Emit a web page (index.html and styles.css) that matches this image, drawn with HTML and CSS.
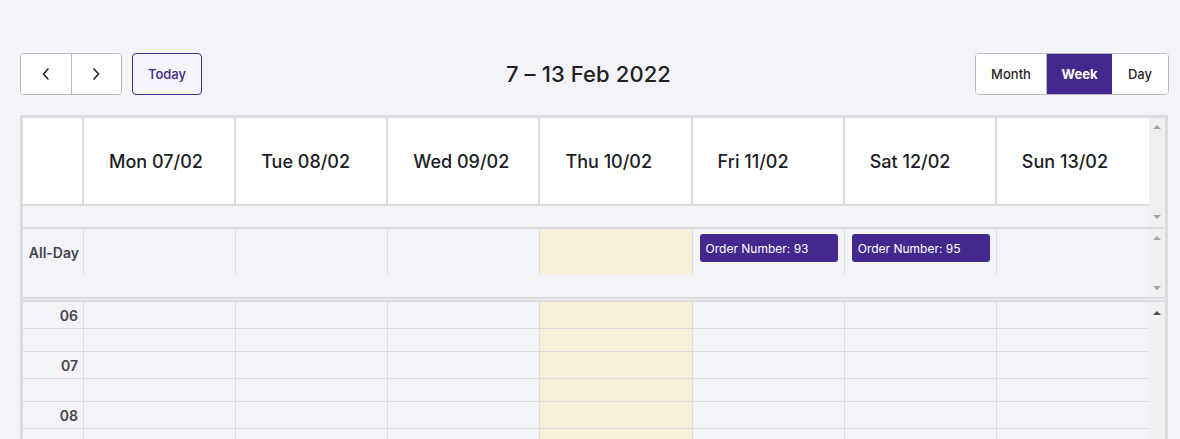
FILE: index.html
```html
<!DOCTYPE html>
<html lang="en">
<head>
<meta charset="utf-8">
<title>Week view</title>
<link rel="stylesheet" href="styles.css">
</head>
<body>
<div class="page">
  <div class="toolbar">
    <div class="btn-group nav">
      <button class="btn nav-btn" aria-label="Previous">
        <svg width="10" height="14" viewBox="0 0 10 14"><path d="M7 2 L2.5 7 L7 12" fill="none" stroke="#222" stroke-width="1.6" stroke-linecap="round" stroke-linejoin="round"/></svg>
      </button>
      <button class="btn nav-btn" aria-label="Next">
        <svg width="10" height="14" viewBox="0 0 10 14"><path d="M3 2 L7.5 7 L3 12" fill="none" stroke="#222" stroke-width="1.6" stroke-linecap="round" stroke-linejoin="round"/></svg>
      </button>
    </div>
    <button class="btn today">Today</button>
    <h1 class="title">7 – 13 Feb 2022</h1>
    <div class="btn-group views">
      <button class="btn view month">Month</button>
      <button class="btn view week active">Week</button>
      <button class="btn view day">Day</button>
    </div>
  </div>

  <div class="calendar">
    <div class="section head">
      <div class="content">
        <div class="grid head-row">
          <div class="hcell gutter"></div>
          <div class="hcell">Mon 07/02</div>
          <div class="hcell">Tue 08/02</div>
          <div class="hcell">Wed 09/02</div>
          <div class="hcell">Thu 10/02</div>
          <div class="hcell">Fri 11/02</div>
          <div class="hcell">Sat 12/02</div>
          <div class="hcell last">Sun 13/02</div>
        </div>
        <div class="strip"></div>
      </div>
      <div class="scrollbar head-sb">
        <span class="arr up"></span>
        <span class="arr down"></span>
      </div>
    </div>

    <div class="section allday">
      <div class="content">
        <div class="grid allday-row">
          <div class="acell label">All-Day</div>
          <div class="acell"></div>
          <div class="acell"></div>
          <div class="acell"></div>
          <div class="acell today-col"></div>
          <div class="acell"><div class="event">Order Number: 93</div></div>
          <div class="acell"><div class="event">Order Number: 95</div></div>
          <div class="acell last"></div>
        </div>
      </div>
      <div class="scrollbar allday-sb">
        <span class="arr up"></span>
        <span class="arr down"></span>
      </div>
    </div>

    <div class="section time">
      <div class="content">
        <div class="grid trow hour"><div class="tcell label">06</div><div class="tcell"></div><div class="tcell"></div><div class="tcell"></div><div class="tcell today-col"></div><div class="tcell"></div><div class="tcell"></div><div class="tcell last"></div></div>
        <div class="grid trow half"><div class="tcell label"></div><div class="tcell"></div><div class="tcell"></div><div class="tcell"></div><div class="tcell today-col"></div><div class="tcell"></div><div class="tcell"></div><div class="tcell last"></div></div>
        <div class="grid trow hour"><div class="tcell label">07</div><div class="tcell"></div><div class="tcell"></div><div class="tcell"></div><div class="tcell today-col"></div><div class="tcell"></div><div class="tcell"></div><div class="tcell last"></div></div>
        <div class="grid trow half"><div class="tcell label"></div><div class="tcell"></div><div class="tcell"></div><div class="tcell"></div><div class="tcell today-col"></div><div class="tcell"></div><div class="tcell"></div><div class="tcell last"></div></div>
        <div class="grid trow hour"><div class="tcell label">08</div><div class="tcell"></div><div class="tcell"></div><div class="tcell"></div><div class="tcell today-col"></div><div class="tcell"></div><div class="tcell"></div><div class="tcell last"></div></div>
        <div class="grid trow half"><div class="tcell label"></div><div class="tcell"></div><div class="tcell"></div><div class="tcell"></div><div class="tcell today-col"></div><div class="tcell"></div><div class="tcell"></div><div class="tcell last"></div></div>
        <div class="grid trow hour"><div class="tcell label"></div><div class="tcell"></div><div class="tcell"></div><div class="tcell"></div><div class="tcell today-col"></div><div class="tcell"></div><div class="tcell"></div><div class="tcell last"></div></div>
      </div>
      <div class="scrollbar time-sb">
        <span class="arr up dark"></span>
      </div>
    </div>
  </div>
</div>
</body>
</html>
```

FILE: styles.css
```css
* { box-sizing: border-box; }

html, body {
  margin: 0;
  padding: 0;
  background: #f4f3f9;
  font-family: Inter, "Noto Sans", "Liberation Sans", sans-serif;
  color: #222;
  overflow: hidden;
}

.page {
  padding: 53px 11px 0 20px;
}

/* Toolbar */
.toolbar {
  display: flex;
  align-items: center;
  height: 42px;
}

.btn {
  font-family: inherit;
  margin: 0;
  padding: 0;
  border: none;
  background: #fff;
  cursor: pointer;
  display: flex;
  align-items: center;
  justify-content: center;
}

.btn-group {
  display: flex;
  height: 42px;
  border: 1px solid #b8b8bf;
  border-radius: 4px;
  overflow: hidden;
  background: #fff;
}

.nav { width: 102px; }
.nav-btn { width: 50px; height: 40px; }
.nav-btn:first-child { border-right: 1px solid #b8b8bf; width: 51px; }

.today {
  margin-left: 10px;
  width: 70px;
  height: 42px;
  border: 1px solid #43288e;
  border-radius: 4px;
  background: #f5f3fb;
  color: #3e2a86;
  font-size: 13px;
  font-weight: 500;
}

.title {
  flex: 1;
  margin: 0;
  text-align: center;
  font-size: 22px;
  font-weight: 500;
  color: #1f1f24;
  letter-spacing: 0.1px;
}

.views { width: 194px; }
.view {
  height: 40px;
  font-size: 13px;
  font-weight: 500;
  color: #2a1f1f;
}
.view.month { width: 71px; border-right: 1px solid #b8b8bf; }
.view.week { width: 65px; }
.view.day { width: 56px; }
.view.active {
  background: #43288e;
  color: #fff;
  font-weight: 700;
}

/* Calendar */
.calendar {
  margin-top: 20px;
  margin-right: 1px;
  border: 3px solid #dcdbdf;
  border-bottom: none;
  background: #f4f3f9;
}

.section {
  display: flex;
}

.content {
  flex: 1;
  min-width: 0;
}

.grid {
  display: grid;
  grid-template-columns: 61px repeat(7, 1fr);
}

.scrollbar {
  width: 16px;
  background: #f0f0f0;
  display: flex;
  flex-direction: column;
  justify-content: space-between;
  align-items: center;
}

.arr {
  width: 0;
  height: 0;
  border-left: 4px solid transparent;
  border-right: 4px solid transparent;
}
.arr.up { border-bottom: 4px solid #a3a3a3; }
.arr.down { border-top: 4px solid #a3a3a3; }
.arr.up.dark { border-bottom-color: #505050; }

/* Header */
.head {
  border-bottom: 2px solid #dcdbdf;
}
.head-row {
  height: 88px;
  background: #dcdbdf;
}
.hcell {
  background: #fff;
  border-right: 2px solid #dcdbdf;
  border-bottom: 2px solid #dcdbdf;
  display: flex;
  align-items: center;
  padding-left: 25px;
  font-size: 18px;
  font-weight: 500;
  color: #1c1c26;
}
.hcell.last { border-right: none; }
.strip {
  height: 21px;
  background: #f4f4f8;
}
.head-sb { padding: 7px 0 8px; }

/* All-day */
.allday {
  height: 70px;
  border-bottom: 2px solid #dcdbdf;
  background: #f4f4f8;
}
.allday-row {
  height: 46px;
}
.acell {
  border-right: 1px solid #dcdbdf;
  padding: 5px 6px 0 7px;
}
.acell.last { border-right: none; }
.acell.label {
  padding: 0 4px 0 0;
  display: flex;
  align-items: center;
  justify-content: flex-end;
  font-size: 14px;
  font-weight: 600;
  color: #44444c;
}
.today-col { background: #f7f0da; }

.event {
  height: 28px;
  background: #43288e;
  border-radius: 3px;
  color: #fff;
  font-size: 12px;
  font-weight: 400;
  display: flex;
  align-items: center;
  padding-left: 6px;
}
.allday-sb { padding: 7px 0 7px; }

/* Time grid */
.time {
  margin-top: 1px;
  border-top: 2px solid #dcdbdf;
  background: #f4f4f8;
}
.trow {
  border-bottom: 1px solid #dcdbdf;
}
.trow.hour { height: 27px; }
.trow.half { height: 23px; }
.tcell {
  border-right: 1px solid #dcdbdf;
}
.tcell.last { border-right: none; }
.tcell.label {
  display: flex;
  align-items: center;
  justify-content: flex-end;
  padding-right: 5px;
  font-size: 14px;
  font-weight: 600;
  color: #44444c;
}
.time-sb {
  padding-top: 9px;
  justify-content: flex-start;
}
```
